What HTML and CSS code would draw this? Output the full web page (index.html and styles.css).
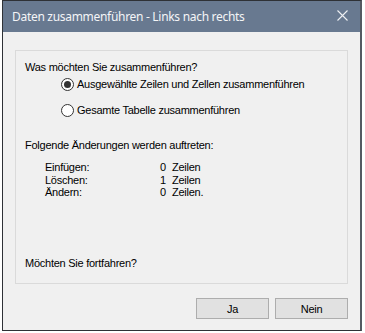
FILE: index.html
```html
<!DOCTYPE html>
<html lang="de">
<head>
    <meta charset="UTF-8">
    <title>Daten zusammenführen</title>
    <link rel="stylesheet" href="styles.css">
</head>
<body>
    <div class="window">
        <div class="titlebar">
            <span class="title">Daten zusammenführen - Links nach rechts</span>
            <svg class="close" width="11" height="11" viewBox="0 0 11 11">
                <path d="M0.5 0.5 L10.5 10.5 M10.5 0.5 L0.5 10.5" stroke="#eef0f3" stroke-width="1.1" fill="none"/>
            </svg>
        </div>

        <div class="content">
            <div class="panel">
                <p class="line">Was möchten Sie zusammenführen?</p>

                <div class="options">
                    <label class="radio">
                        <span class="dot checked"></span>
                        Ausgewählte Zeilen und Zellen zusammenführen
                    </label>
                    <label class="radio second">
                        <span class="dot"></span>
                        Gesamte Tabelle zusammenführen
                    </label>
                </div>

                <p class="line changes-head">Folgende Änderungen werden auftreten:</p>

                <div class="changes">
                    <span class="name">Einfügen:</span><span class="num">0</span><span>Zeilen</span>
                    <span class="name">Löschen:</span><span class="num">1</span><span>Zeilen</span>
                    <span class="name">Ändern:</span><span class="num">0</span><span>Zeilen.</span>
                </div>

                <p class="line ask">Möchten Sie fortfahren?</p>
            </div>

            <div class="buttons">
                <button type="button">Ja</button>
                <button type="button">Nein</button>
            </div>
        </div>
    </div>
</body>
</html>
```

FILE: styles.css
```css
body {
    margin: 0;
    background-color: white;
    font-family: "Liberation Sans", Arial, sans-serif;
    font-size: 11px;
    letter-spacing: -0.25px;
    color: #000;
}

.window {
    margin-left: 2px;
    width: 357px;
    height: 329px;
    border: 1px solid #2e3136;
    border-right: 2px solid #555a62;
    background-color: #f0f0f0;
    display: flex;
    flex-direction: column;
}

.titlebar {
    height: 31px;
    background-color: #687990;
    display: flex;
    align-items: center;
    justify-content: space-between;
    padding: 0 12px 0 9px;
    flex-shrink: 0;
}

.title {
    font-family: "Noto Sans", "Open Sans", sans-serif;
    font-size: 12px;
    letter-spacing: -0.3px;
    color: #f4f5f7;
    margin-top: -1px;
}

.close {
    margin-top: -3px;
}

.content {
    flex: 1;
    display: flex;
    flex-direction: column;
}

.panel {
    margin: 18px 0 0 12px;
    width: 333px;
    height: 234px;
    border: 1px solid #dadada;
    padding: 10px 0 13px 9px;
    box-sizing: border-box;
    display: flex;
    flex-direction: column;
}

.line {
    margin: 0;
    line-height: 13px;
}

.options {
    margin-top: 4px;
    padding-left: 36px;
}

.radio {
    display: flex;
    align-items: center;
    gap: 3px;
    height: 13px;
    line-height: 13px;
}

.radio.second {
    margin-top: 13px;
}

.dot {
    width: 13px;
    height: 13px;
    box-sizing: border-box;
    border: 1px solid #333;
    border-radius: 50%;
    background-color: white;
    display: flex;
    align-items: center;
    justify-content: center;
    flex-shrink: 0;
}

.dot.checked::after {
    content: "";
    width: 7px;
    height: 7px;
    border-radius: 50%;
    background-color: #333;
}

.changes-head {
    margin-top: 22px;
}

.changes {
    margin-top: 9px;
    padding-left: 20px;
    display: grid;
    grid-template-columns: 115px 12px auto;
    line-height: 12.5px;
}

.ask {
    margin-top: auto;
}

.buttons {
    margin-top: 14px;
    padding-right: 12px;
    display: flex;
    justify-content: flex-end;
    gap: 6px;
}

button {
    width: 73px;
    height: 21px;
    background-color: #e1e1e1;
    border: 1px solid #adadad;
    font-family: "Liberation Sans", Arial, sans-serif;
    font-size: 11px;
    letter-spacing: -0.25px;
    color: #000;
    padding: 0;
}
```
